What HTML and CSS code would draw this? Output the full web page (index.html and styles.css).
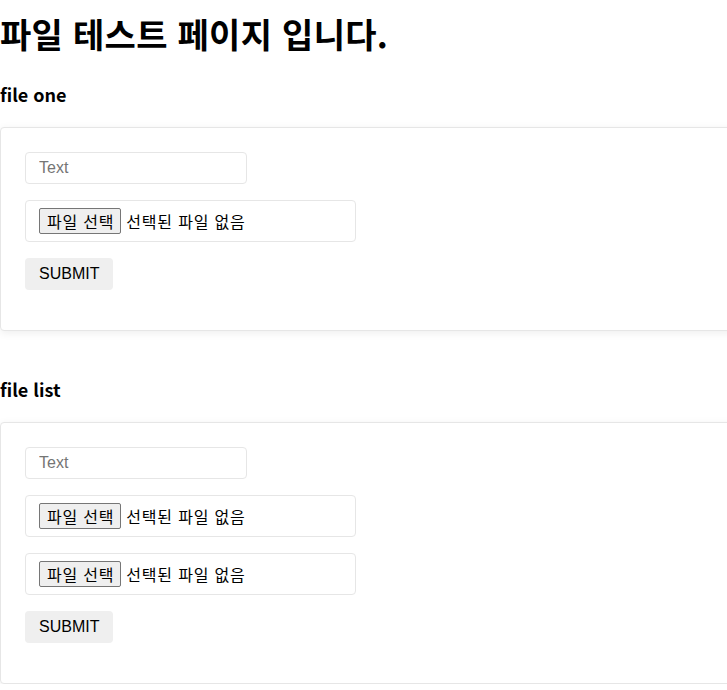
FILE: index.html
```html
<!DOCTYPE html>
<html lang="ko">
<head>
    <meta charset="UTF-8">
    <meta name="viewport" content="width=device-width, initial-scale=1.0">
    <title>파일 테스트</title>
    <link rel="stylesheet" href="styles.css">
</head>
<body>
    <h1>파일 테스트 페이지 입니다.</h1>

    <h3>file one</h3>
    <form class="card">
        <input type="text" class="text-field" placeholder="Text">
        <label class="file-field">
            <input type="file" hidden>
            <span class="file-btn">파일 선택</span>
            <span class="file-name">선택된 파일 없음</span>
        </label>
        <button type="button" class="submit-btn">SUBMIT</button>
    </form>

    <h3 class="list-title">file list</h3>
    <form class="card">
        <input type="text" class="text-field" placeholder="Text">
        <label class="file-field">
            <input type="file" hidden>
            <span class="file-btn">파일 선택</span>
            <span class="file-name">선택된 파일 없음</span>
        </label>
        <label class="file-field">
            <input type="file" hidden>
            <span class="file-btn">파일 선택</span>
            <span class="file-name">선택된 파일 없음</span>
        </label>
        <button type="button" class="submit-btn">SUBMIT</button>
    </form>
</body>
</html>
```

FILE: styles.css
```css
html, body {
    overflow-x: hidden;
}
body {
    margin: 0;
    font-family: "Noto Sans CJK KR", sans-serif;
    color: #000;
    background: #fff;
}
h1 {
    font-size: 34px;
    line-height: 40px;
    font-weight: bold;
    letter-spacing: 0.3px;
    margin: 14px 0 0;
}
h3 {
    font-size: 18px;
    line-height: 24px;
    font-weight: bold;
    margin: 28px 0 21px;
}
.list-title {
    margin-top: 46px;
}
.card {
    display: flex;
    flex-direction: column;
    align-items: flex-start;
    gap: 16px;
    width: 100%;
    padding: 24px 24px 40px;
    border: 1px solid #e6e6e6;
    border-radius: 4px;
    box-shadow: 0 2px 8px rgba(0, 0, 0, 0.07);
    background: #fff;
}
.text-field {
    box-sizing: border-box;
    width: 222px;
    height: 32px;
    padding: 0 13px;
    border: 1px solid #e6e6e6;
    border-radius: 4px;
    font-family: "Liberation Sans", "Noto Sans CJK KR", sans-serif;
    font-size: 16px;
    outline: none;
}
.text-field::placeholder {
    color: #757575;
}
.file-field {
    box-sizing: border-box;
    display: flex;
    align-items: center;
    width: 331px;
    height: 42px;
    padding: 7px 13px;
    border: 1px solid #e6e6e6;
    border-radius: 4px;
    font-family: "Liberation Sans", "Noto Sans CJK KR", sans-serif;
    font-size: 16px;
    letter-spacing: 0.8px;
    cursor: pointer;
}
.file-btn {
    box-sizing: border-box;
    display: flex;
    align-items: center;
    height: 26px;
    padding: 0 6px 0 7px;
    border: 1px solid #767676;
    border-radius: 2px;
    background: #efefef;
    margin-right: 5px;
}
.submit-btn {
    height: 32px;
    padding: 0 14px;
    border: none;
    border-radius: 4px;
    background: #efefef;
    color: #000;
    font-family: "Liberation Sans", sans-serif;
    font-size: 16px;
    cursor: pointer;
}
```
